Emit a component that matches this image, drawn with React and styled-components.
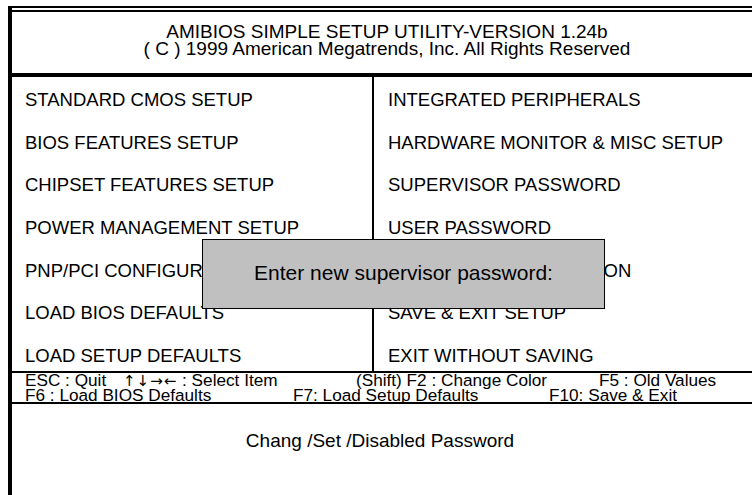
import React from 'react';
import styled, { createGlobalStyle } from 'styled-components';

const GlobalStyle = createGlobalStyle`
  html, body {
    margin: 0;
    padding: 0;
    background: #fff;
    overflow: hidden;
  }
  body {
    font-family: "Liberation Sans", Arial, sans-serif;
    color: #000;
  }
`;

const Frame = styled.div`
  margin: 6px 0 0 8px;
  width: 756px;
  border-top: 2px solid #000;
  border-left: 4px solid #000;
  padding-top: 2px;
  padding-bottom: 30px;
`;

const Header = styled.header`
  box-sizing: border-box;
  height: 67px;
  padding-top: 11px;
  border-top: 2px solid #000;
  border-bottom: 4px solid #000;
  text-align: center;
  padding-right: 6px;
  font-size: 19px;
  line-height: 17px;
`;

const Menu = styled.section`
  position: relative;
  display: grid;
  grid-template-columns: 360px 1fr;
`;

const Column = styled.div`
  display: grid;
  grid-template-rows: repeat(6, 42.67px) 38px;
  border-left: ${({ $divided }) => ($divided ? '2px solid #000' : 'none')};
  padding-left: ${({ $divided }) => ($divided ? '14px' : '13px')};
`;

const Item = styled.div`
  padding-top: 14px;
  font-size: 18.5px;
  line-height: 18px;
  white-space: nowrap;
`;

const Dialog = styled.div`
  position: absolute;
  left: 190px;
  top: 162px;
  width: 403px;
  height: 70px;
  box-sizing: border-box;
  border: 1.5px solid #000;
  background: #c0c0c0;
  display: flex;
  align-items: center;
  justify-content: center;
  padding-bottom: 2px;
  font-size: 21px;
`;

const Footer = styled.section`
  border-top: 2px solid #000;
  border-bottom: 2px solid #000;
  padding-left: 13px;
  font-size: 17.2px;
  line-height: 14px;
`;

const KeyLine = styled.div`
  display: grid;
  grid-template-columns: ${({ $cols }) => $cols};
  white-space: nowrap;
`;

const Arrows = styled.span`
  font-family: "DejaVu Sans", sans-serif;
  font-size: 15px;
  letter-spacing: 1px;
`;

const Status = styled.div`
  height: 74px;
  display: flex;
  align-items: center;
  justify-content: center;
  padding-right: 20px;
  font-size: 19px;
`;

const left = [
  'STANDARD CMOS SETUP',
  'BIOS FEATURES SETUP',
  'CHIPSET FEATURES SETUP',
  'POWER MANAGEMENT SETUP',
  'PNP/PCI CONFIGURATION',
  'LOAD BIOS DEFAULTS',
  'LOAD SETUP DEFAULTS',
];

const right = [
  'INTEGRATED PERIPHERALS',
  'HARDWARE MONITOR & MISC SETUP',
  'SUPERVISOR PASSWORD',
  'USER PASSWORD',
  'IDE HDD AUTO DETECTION',
  'SAVE & EXIT SETUP',
  'EXIT WITHOUT SAVING',
];

export default function App() {
  return (
    <>
      <GlobalStyle />
      <Frame>
        <Header>
          <div>AMIBIOS SIMPLE SETUP UTILITY-VERSION 1.24b</div>
          <div>( C ) 1999 American Megatrends, Inc. All Rights Reserved</div>
        </Header>
        <Menu>
          <Column>
            {left.map((t) => <Item key={t}>{t}</Item>)}
          </Column>
          <Column $divided>
            {right.map((t) => <Item key={t}>{t}</Item>)}
          </Column>
          <Dialog>Enter new supervisor password:</Dialog>
        </Menu>
        <Footer>
          <KeyLine $cols="98px 233px 243px auto">
            <span>ESC : Quit</span>
            <span><Arrows>↑↓→←</Arrows> : Select Item</span>
            <span>(Shift) F2 : Change Color</span>
            <span>F5 : Old Values</span>
          </KeyLine>
          <KeyLine $cols="268px 256px auto">
            <span>F6 : Load BIOS Defaults</span>
            <span>F7: Load Setup Defaults</span>
            <span>F10: Save &amp; Exit</span>
          </KeyLine>
        </Footer>
        <Status>Chang /Set /Disabled Password</Status>
      </Frame>
    </>
  );
}
